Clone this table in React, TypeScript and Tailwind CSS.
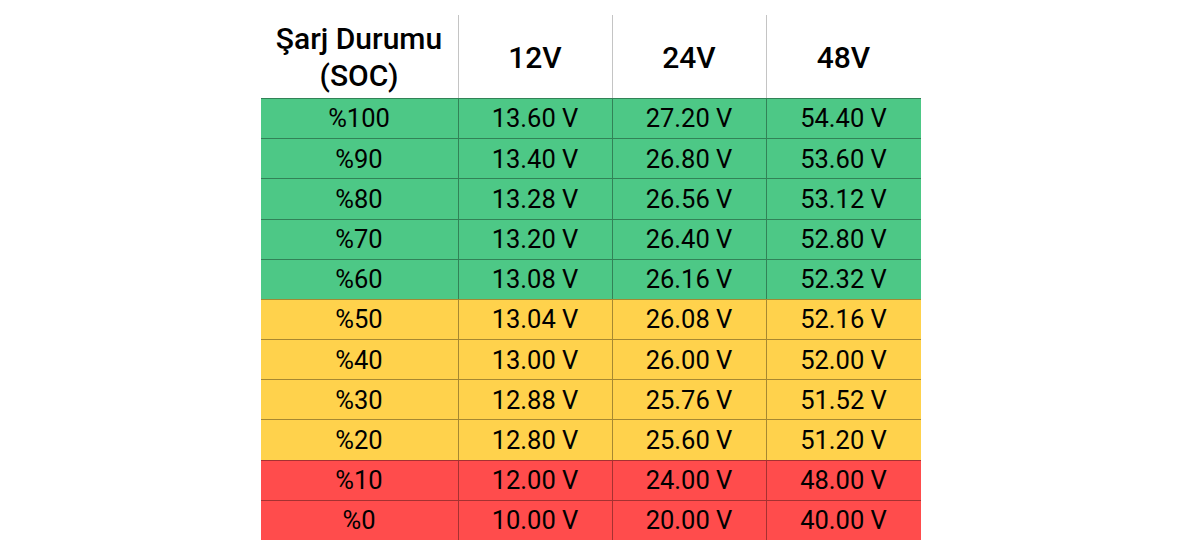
const rows = [
  { soc: "%100", v: ["13.60 V", "27.20 V", "54.40 V"], bg: "bg-[#4dc886]" },
  { soc: "%90", v: ["13.40 V", "26.80 V", "53.60 V"], bg: "bg-[#4dc886]" },
  { soc: "%80", v: ["13.28 V", "26.56 V", "53.12 V"], bg: "bg-[#4dc886]" },
  { soc: "%70", v: ["13.20 V", "26.40 V", "52.80 V"], bg: "bg-[#4dc886]" },
  { soc: "%60", v: ["13.08 V", "26.16 V", "52.32 V"], bg: "bg-[#4dc886]" },
  { soc: "%50", v: ["13.04 V", "26.08 V", "52.16 V"], bg: "bg-[#ffd24c]" },
  { soc: "%40", v: ["13.00 V", "26.00 V", "52.00 V"], bg: "bg-[#ffd24c]" },
  { soc: "%30", v: ["12.88 V", "25.76 V", "51.52 V"], bg: "bg-[#ffd24c]" },
  { soc: "%20", v: ["12.80 V", "25.60 V", "51.20 V"], bg: "bg-[#ffd24c]" },
  { soc: "%10", v: ["12.00 V", "24.00 V", "48.00 V"], bg: "bg-[#ff4c4c]" },
  { soc: "%0", v: ["10.00 V", "20.00 V", "40.00 V"], bg: "bg-[#ff4c4c]" },
]

export default function App() {
  return (
    <div
      className="w-[1181px] h-[557px] bg-white flex justify-center pt-[15px] text-black"
      style={{ fontFamily: "Roboto, 'Liberation Sans', sans-serif" }}
    >
      <div className="w-[660px] flex flex-col">
        {/* header */}
        <div className="grid grid-cols-[198px_154px_154px_154px] h-[83px] text-[30px] font-medium leading-[37px] text-center">
          <div className="flex items-center justify-center border-r border-[#c4c4c4] pt-[1px]">
            Şarj Durumu
            <br />
            (SOC)
          </div>
          <div className="flex items-center justify-center border-r border-[#c4c4c4] pt-[2px]">12V</div>
          <div className="flex items-center justify-center border-r border-[#c4c4c4] pt-[2px]">24V</div>
          <div className="flex items-center justify-center pt-[2px]">48V</div>
        </div>

        {/* rows */}
        <div className="grid grid-rows-[repeat(11,1fr)] h-[442px] text-[25.5px]">
          {rows.map((r) => (
            <div
              key={r.soc}
              className={`grid grid-cols-[198px_154px_154px_154px] border-t border-black/35 ${r.bg}`}
            >
              <div className="flex items-center justify-center border-r border-black/35">{r.soc}</div>
              <div className="flex items-center justify-center border-r border-black/35">{r.v[0]}</div>
              <div className="flex items-center justify-center border-r border-black/35">{r.v[1]}</div>
              <div className="flex items-center justify-center">{r.v[2]}</div>
            </div>
          ))}
        </div>
      </div>
    </div>
  )
}
